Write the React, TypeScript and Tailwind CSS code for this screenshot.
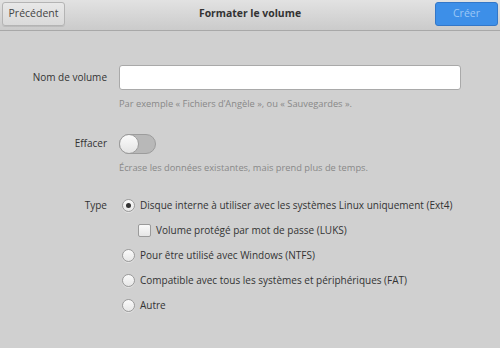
import React from "react";

function Radio({ checked }: { checked?: boolean }) {
  return (
    <span className="flex h-[13px] w-[13px] shrink-0 items-center justify-center rounded-full border border-[#9a9a9a] bg-gradient-to-b from-[#fafafa] to-[#e6e6e6] shadow-[0_1px_0_rgba(255,255,255,0.4)]">
      {checked && <span className="h-[5px] w-[5px] rounded-full bg-[#333]" />}
    </span>
  );
}

export default function App() {
  return (
    <div
      className="flex h-[348px] w-[500px] flex-col bg-[#d0d0d0] text-[10px] text-[#333]"
      style={{ fontFamily: '"Open Sans", "Noto Sans", sans-serif' }}
    >
      <div className="flex h-[31px] items-center justify-between border-b border-[#a8a8a8] bg-gradient-to-b from-[#e2e2e2] to-[#cbcbcb] px-[2px] pb-[3px] pt-[1px]">
        <button className="h-[24px] w-[63px] rounded-[3px] border border-[#b4b4b4] bg-gradient-to-b from-[#e8e8e8] to-[#dadada] text-[10.5px] text-[#444] shadow-[0_1px_0_rgba(0,0,0,0.08)]">
          Précédent
        </button>
        <div className="text-[10.4px] font-bold text-[#333]">Formater le volume</div>
        <button className="h-[24px] w-[63px] rounded-[3px] border border-[#3377c8] bg-[#3d8fe8] text-[10.5px] text-[#9cc8f6]">
          Créer
        </button>
      </div>

      <div className="grid grid-cols-[107px_1fr] gap-x-[12px] pr-[39px] pt-[34px]">
        <div className="flex h-[25px] items-center justify-end">Nom de volume</div>
        <div className="h-[25px] rounded-[3px] border border-[#a9a9a9] bg-white" />
        <div />
        <div className="mt-[7px] text-[9.3px] text-[#888]">
          Par exemple « Fichiers d’Angèle », ou « Sauvegardes ».
        </div>

        <div className="mt-[23px] flex h-[20px] items-center justify-end">Effacer</div>
        <div className="mt-[23px] flex h-[20px] items-center">
          <span className="relative h-[20px] w-[37px] rounded-full border border-[#9c9c9c] bg-[#b8b8b8]">
            <span className="absolute left-[-1px] top-[-1px] h-[20px] w-[20px] rounded-full border border-[#9c9c9c] bg-gradient-to-b from-[#fbfbfb] to-[#e4e4e4]" />
          </span>
        </div>
        <div />
        <div className="mt-[7px] text-[9.3px] text-[#888]">
          Écrase les données existantes, mais prend plus de temps.
        </div>

        <div className="mt-[23px] flex h-[15px] items-center justify-end">Type</div>
        <div className="mt-[23px] flex flex-col gap-[10px] pl-[3px]">
          <div className="flex h-[15px] items-center gap-[5px]">
            <Radio checked />
            <span className="whitespace-nowrap">Disque interne à utiliser avec les systèmes Linux uniquement (Ext4)</span>
          </div>
          <div className="flex h-[15px] items-center gap-[5px] pl-[16px]">
            <span className="h-[13px] w-[13px] rounded-[2px] border border-[#9a9a9a] bg-gradient-to-b from-[#fafafa] to-[#e6e6e6]" />
            <span>Volume protégé par mot de passe (LUKS)</span>
          </div>
          <div className="flex h-[15px] items-center gap-[5px]">
            <Radio />
            <span>Pour être utilisé avec Windows (NTFS)</span>
          </div>
          <div className="flex h-[15px] items-center gap-[5px]">
            <Radio />
            <span>Compatible avec tous les systèmes et périphériques (FAT)</span>
          </div>
          <div className="flex h-[15px] items-center gap-[5px]">
            <Radio />
            <span>Autre</span>
          </div>
        </div>
      </div>
    </div>
  );
}
